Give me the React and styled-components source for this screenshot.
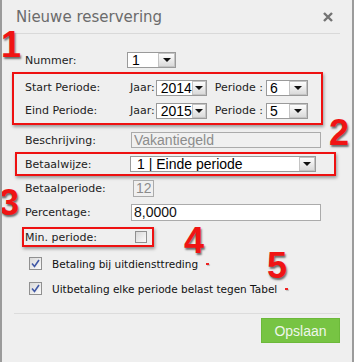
import React from 'react'
import styled, { createGlobalStyle } from 'styled-components'

const GlobalStyle = createGlobalStyle`
  html, body {
    margin: 0;
    padding: 0;
    background: #efefef;
  }
  * {
    box-sizing: border-box;
  }
`

const Dialog = styled.div`
  position: relative;
  width: 354px;
  height: 362px;
  background: #efefef;
  border-left: 2px solid #9b9b9b;
  border-right: 2px solid #9b9b9b;
  font-family: "DejaVu Sans", Verdana, sans-serif;
  overflow: hidden;
`

const Header = styled.div`
  height: 34px;
  margin: 0 12px;
  padding: 0 7px 0 2px;
  display: flex;
  align-items: center;
  justify-content: space-between;
  border-bottom: 1px solid #d9d9d9;
`

const Title = styled.h1`
  margin: 0;
  font-size: 15px;
  font-weight: normal;
  color: #6b6b6b;
`

const Close = styled.button`
  border: 0;
  padding: 0;
  background: none;
  width: 10px;
  height: 10px;
  display: flex;
`

const Form = styled.div`
  padding: 14px 31px 0 23px;
`

const Row = styled.div`
  display: flex;
  align-items: center;
  height: ${p => p.$h || 24}px;
  margin-top: ${p => p.$mt || 0}px;
`

const Label = styled.span`
  flex: none;
  width: ${p => p.$w || 105}px;
  font-size: 11px;
  color: #222;
  white-space: nowrap;
`

const InlineLabel = styled.span`
  flex: none;
  font-size: 11px;
  color: #222;
  margin-left: ${p => p.$ml || 0}px;
  margin-right: ${p => p.$mr || 0}px;
  white-space: nowrap;
`

const Highlight = styled.div`
  border: 2px solid #ee1111;
  box-shadow: 1px 2px 3px rgba(0, 0, 0, 0.35);
  margin: ${p => p.$mt || 0}px ${p => -(p.$right || 0)}px 0 ${p => -p.$inset}px;
  padding: ${p => p.$pt || 0}px 0 ${p => p.$pb || 0}px ${p => p.$inset - 2}px;
  width: ${p => (p.$width ? `${p.$width}px` : 'auto')};
`

const SelectBox = styled.div`
  flex: none;
  display: flex;
  width: ${p => p.$w}px;
  height: ${p => p.$h || 16}px;
  margin-left: ${p => p.$ml || 0}px;
  border: 1px solid #9a9a9a;
  background: #fff;
`

const SelectValue = styled.span`
  flex: 1;
  padding-left: ${p => p.$pl || 4}px;
  font: 14px "Liberation Sans", Arial, sans-serif;
  line-height: ${p => (p.$h || 16) - 2}px;
  color: #000;
  white-space: nowrap;
  overflow: hidden;
`

const SelectButton = styled.span`
  flex: none;
  width: ${p => p.$w || 15}px;
  border: 1px solid #c4c4c4;
  background: linear-gradient(#fdfdfd, #dadada);
  display: flex;
  align-items: center;
  justify-content: center;
  &::after {
    content: '';
    border-left: 4px solid transparent;
    border-right: 4px solid transparent;
    border-top: 4px solid #111;
  }
`

const TextInput = styled.input`
  flex: none;
  width: ${p => p.$w}px;
  height: ${p => p.$h || 17}px;
  margin: 0 0 0 ${p => p.$ml || 0}px;
  padding: 0 2px;
  border: 1px solid #ababab;
  border-radius: 0;
  background: ${p => (p.$muted ? '#f0f0f0' : '#fff')};
  color: ${p => (p.$muted ? '#8c8c8c' : '#111')};
  font: 14px "Liberation Sans", Arial, sans-serif;
  outline: none;
`

const Check = styled.span`
  flex: none;
  width: ${p => p.$size || 13}px;
  height: ${p => p.$size || 13}px;
  margin-left: ${p => p.$ml || 0}px;
  border: 1px solid #909090;
  background: linear-gradient(135deg, #d9d9d9, #fbfbfb);
  display: flex;
  align-items: center;
  justify-content: center;
`

const CheckRow = styled.div`
  display: flex;
  align-items: center;
  height: 25px;
  padding-left: 4px;
  margin-top: ${p => p.$mt || 0}px;
`

const CheckText = styled.span`
  margin-left: 10px;
  font-size: 10.5px;
  color: #111;
  white-space: nowrap;
`

const Required = styled.span`
  width: 3px;
  height: 2px;
  margin-left: 8px;
  background: #e22;
  box-shadow: 1px 1px 1px rgba(0, 0, 0, 0.2);
`

const Footer = styled.div`
  margin: 12px 12px 0;
  padding-top: 4px;
  border-top: 1px solid #dcdcdc;
  display: flex;
  justify-content: flex-end;
`

const SaveButton = styled.button`
  width: 79px;
  height: 25px;
  border: 1px solid #6cb93a;
  background: #77c443;
  color: #eef6ea;
  font: 14px "Liberation Sans", Arial, sans-serif;
  padding: 0;
`

const Mark = styled.span`
  position: absolute;
  left: ${p => p.$x}px;
  top: ${p => p.$y}px;
  font: bold 36px/1 "Liberation Sans", Arial, sans-serif;
  color: #f01414;
  text-shadow: 1px 2px 2px rgba(0, 0, 0, 0.55);
  pointer-events: none;
`

function Select ({ width, value, button = 15, pad }) {
  return (
    <SelectBox $w={width}>
      <SelectValue $pl={pad}>{value}</SelectValue>
      <SelectButton $w={button} />
    </SelectBox>
  )
}

function CheckMark () {
  return (
    <svg width='9' height='9' viewBox='0 0 9 9'>
      <path d='M1 4.5 L3.5 7.5 L8 1' fill='none' stroke='#4058a6' strokeWidth='1.6' />
    </svg>
  )
}

export default function App () {
  return (
    <Dialog>
      <GlobalStyle />
      <Header>
        <Title>Nieuwe reservering</Title>
        <Close aria-label='Sluiten'>
          <svg width='10' height='10' viewBox='0 0 10 10'>
            <path d='M1 1 L9 9 M9 1 L1 9' stroke='#737373' strokeWidth='2.4' />
          </svg>
        </Close>
      </Header>

      <Form>
        <Row>
          <Label $w={102}>Nummer:</Label>
          <Select width={49} value='1' button={17} />
        </Row>

        <Highlight $inset={13} $right={2} $pt={2} $pb={1}>
          <Row $h={23}>
            <Label>Start Periode:</Label>
            <InlineLabel $mr={1}>Jaar:</InlineLabel>
            <Select width={51} value='2014' button={14} />
            <InlineLabel $ml={8} $mr={3}>Periode :</InlineLabel>
            <Select width={42} value='6' button={18} pad={3} />
          </Row>
          <Row $h={23}>
            <Label>Eind Periode:</Label>
            <InlineLabel $mr={1}>Jaar:</InlineLabel>
            <Select width={51} value='2015' button={14} />
            <InlineLabel $ml={8} $mr={3}>Periode :</InlineLabel>
            <Select width={42} value='5' button={18} pad={3} />
          </Row>
        </Highlight>

        <Row $mt={3}>
          <Label>Beschrijving:</Label>
          <TextInput $w={190} $h={16} $ml={1} $muted readOnly value='Vakantiegeld' />
        </Row>

        <Highlight $inset={10} $right={15}>
          <Row $h={20}>
            <Label>Betaalwijze:</Label>
            <Select width={186} value='1 | Einde periode' button={16} pad={6} />
          </Row>
        </Highlight>

        <Row>
          <Label>Betaalperiode:</Label>
          <TextInput $w={21} $ml={3} $muted readOnly value='12' />
        </Row>

        <Row>
          <Label>Percentage:</Label>
          <TextInput $w={190} $ml={1} readOnly value='8,0000' />
        </Row>

        <Highlight $inset={3} $width={132} $mt={3}>
          <Row $h={16}>
            <Label $w={110}>Min. periode:</Label>
            <Check $size={12} />
          </Row>
        </Highlight>

        <CheckRow $mt={4}>
          <Check><CheckMark /></Check>
          <CheckText>Betaling bij uitdiensttreding</CheckText>
          <Required />
        </CheckRow>
        <CheckRow>
          <Check><CheckMark /></Check>
          <CheckText>Uitbetaling elke periode belast tegen Tabel</CheckText>
          <Required />
        </CheckRow>
      </Form>

      <Footer>
        <SaveButton>Opslaan</SaveButton>
      </Footer>

      <Mark $x={-1} $y={27}>1</Mark>
      <Mark $x={327} $y={115}>2</Mark>
      <Mark $x={-3} $y={185}>3</Mark>
      <Mark $x={182} $y={223}>4</Mark>
      <Mark $x={265} $y={248}>5</Mark>
    </Dialog>
  )
}
